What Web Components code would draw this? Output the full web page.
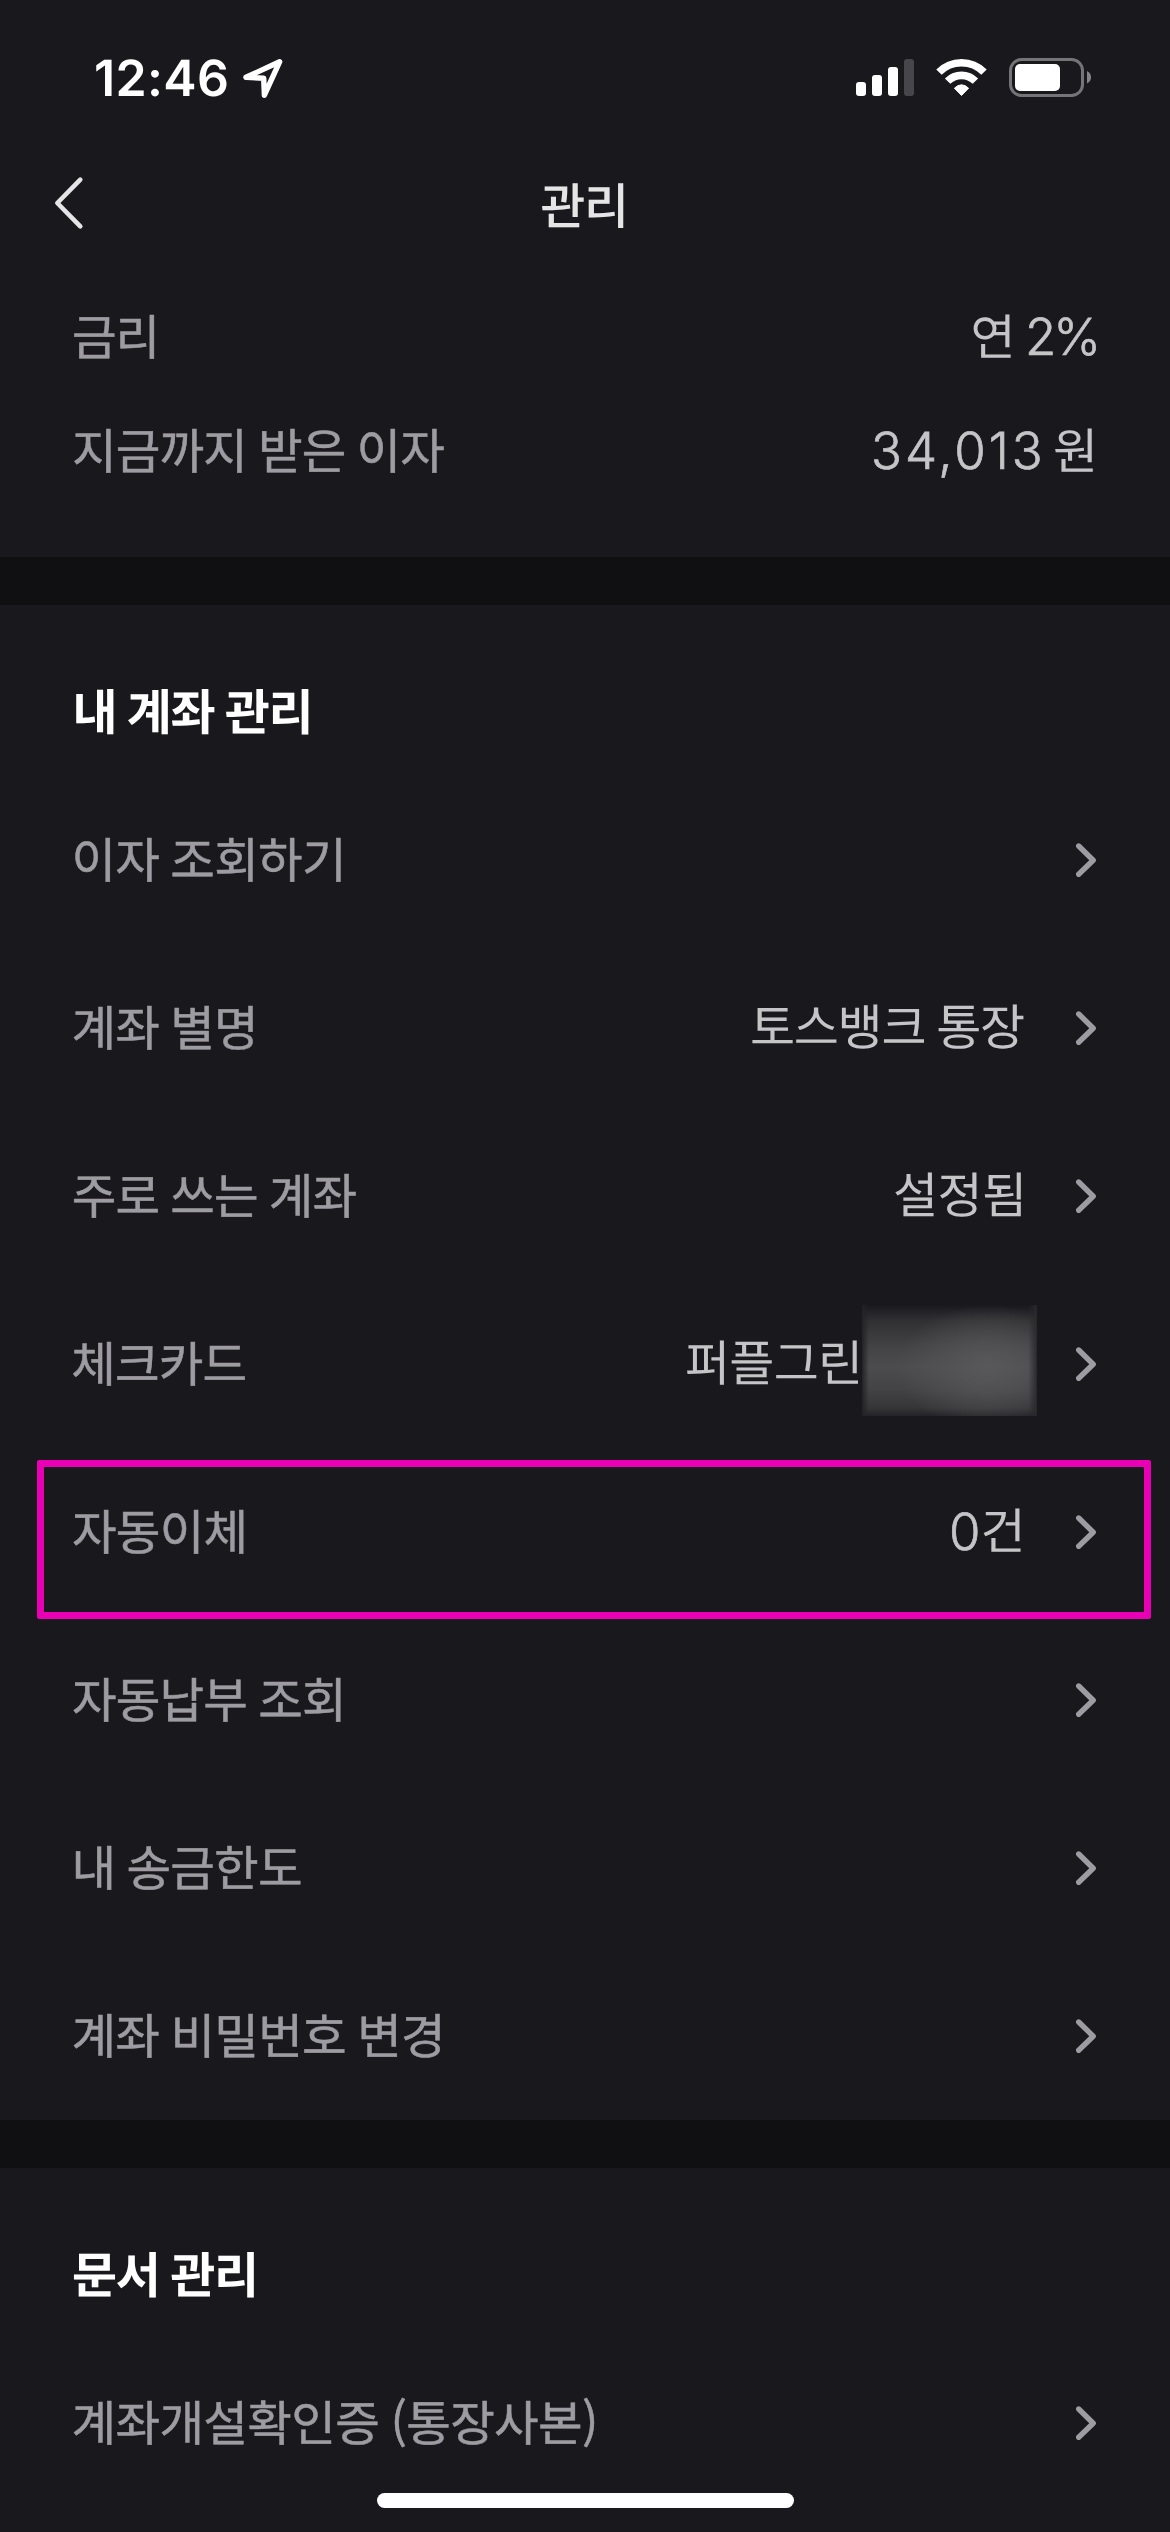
<!DOCTYPE html>
<html lang="ko">
<head>
<meta charset="utf-8">
<title>관리</title>
<style>
html,body{margin:0;padding:0;background:#19181d}
body{width:1170px;height:2532px;overflow:hidden;font-family:"Noto Sans CJK KR",sans-serif}
</style>
</head>
<body>
<account-screen></account-screen>
<script>
const define=(name,html,setup)=>customElements.define(name,class extends HTMLElement{
  connectedCallback(){
    if(this.shadowRoot)return;
    this.attachShadow({mode:'open'}).innerHTML=html;
    if(setup)setup(this);
  }
});

/* A line of text tracked so that its ink is exactly "w" pixels wide. */
const ctx=document.createElement('canvas').getContext('2d');
customElements.define('ink-text',class extends HTMLElement{
  connectedCallback(){
    if(this.shadowRoot)return;
    const a=(n,d)=>this.getAttribute(n)||d;
    const text=a('text',''),size=+a('size',49),weight=a('weight',400);
    const latin=a('face','')==='latin';
    const family=latin?'Inter,"Noto Sans CJK KR",sans-serif':'"Noto Sans CJK KR",sans-serif';
    const w=+a('w',0),dy=+a('dy',0),stroke=+a('stroke',0);
    ctx.font=`${weight} ${size}px ${family}`;
    const m=ctx.measureText(text);
    const left=m.actualBoundingBoxLeft,right=m.width-m.actualBoundingBoxRight;
    this.attachShadow({mode:'open'}).innerHTML=`<style>
      :host{display:block;flex:none;width:${w}px;height:60px;padding-top:${dy}px;box-sizing:border-box}
      span{display:inline-block;vertical-align:top;white-space:pre;margin-left:${left}px;font:${weight} ${size}px/${latin?60:54}px ${family};-webkit-text-stroke:${stroke}px currentColor;text-rendering:geometricPrecision;word-spacing:-1.5px}
    </style><span></span>`;
    const s=this.shadowRoot.querySelector('span');
    s.textContent=text;
    const n=text.length;
    if(n>1){
      const advance=s.getBoundingClientRect().width||m.width;
      s.style.letterSpacing=(w-stroke-(advance+left-right))/(n-1)+'px';
      const wide=s.getBoundingClientRect().width;
      if(wide){
        const ls=parseFloat(s.style.letterSpacing);
        const ink=wide-ls+left-right;
        s.style.letterSpacing=ls+(w-stroke-ink)/(n-1)+'px';
      }
    }
  }
});

define('status-bar',`<style>
:host{display:flex;height:154px;box-sizing:border-box;padding:48px 79px 0 96px;color:#fff}
.sp{flex:1}
svg{flex:none;display:block;margin-top:4px}
</style>
<ink-text text="12:46" face="latin" weight="600" size="50" w="131" dy="1"></ink-text>
<svg style="margin-left:14px" width="46" height="54" viewBox="241 52 46 54"><path d="M279.6 61.8 246 77.3 263.7 78.2 264.4 95.2Z" fill="none" stroke="#fff" stroke-width="5.4" stroke-linejoin="round"/></svg>
<div class="sp"></div>
<svg width="237" height="54" viewBox="854 52 237 54">
<g fill="#fff"><rect x="856" y="82" width="10" height="14" rx="3"/><rect x="872" y="75" width="10" height="21" rx="3"/><rect x="888" y="67" width="10" height="29" rx="3"/><rect x="904" y="59" width="10" height="37" rx="3" fill="#47464b"/></g>
<g fill="none" stroke="#fff"><path stroke-width="7.6" d="M939 72.2A31.5 31.5 0 0 1 984 72.2"/><path stroke-width="7.6" d="M947.6 81.2A19.5 19.5 0 0 1 975.4 81.2"/></g>
<path fill="#fff" stroke="#fff" stroke-width="1" stroke-linejoin="round" d="M954.4 88.2Q961.5 81.4 968.6 88.2L961.5 95.5Z"/>
<rect x="1010.5" y="59.5" width="72" height="36" rx="11" fill="none" stroke="#757477" stroke-width="3"/>
<rect x="1015" y="64" width="45" height="27" rx="5" fill="#fff"/>
<path fill="#858488" d="M1087 71Q1091 73 1091 77.300Q1091 81.500 1087 83.500Z"/>
</svg>`);

define('nav-bar',`<style>
:host{display:flex;align-items:center;height:98px;padding:0 0 4px 52px;color:#e5e5e5}
svg{flex:none;display:block}
ink-text{margin-left:455.300px}
</style>
<svg width="34" height="60" viewBox="52 173 34 60"><path d="M80.300 179.700 57.300 203 80.300 226.400" fill="none" stroke="#e5e5e5" stroke-width="4.600" stroke-linecap="round" stroke-linejoin="round"/></svg>
<ink-text text="관리" weight="500" w="82.700" dy="4"></ink-text>`);

define('info-row',`<style>
:host{display:flex;align-items:center;height:114px;padding:0 0 0 74px;color:#9e9ca3}
.v{flex:1;display:flex;justify-content:flex-end;color:#c5c4c7}
</style><slot name="label"></slot><div class="v"><slot></slot></div>`);

define('menu-row',`<style>
:host{display:flex;align-items:center;height:168px;padding:0 74px 0 0;color:#9e9ca3}
.v{flex:1;display:flex;justify-content:flex-end;align-items:center;color:#c5c4c7}
svg{flex:none;display:block}
</style><slot name="label"></slot><div class="v"><slot></slot></div>
<svg width="20" height="34" viewBox="0 0 20 34"><path d="M2.700 3 17.200 17.200 2.700 31.300" fill="none" stroke="#9e9ca3" stroke-width="5.4" stroke-linecap="round" stroke-linejoin="round"/></svg>`);

define('section-gap',`<style>:host{display:block;height:48px;background:#101012}</style>`);
define('section-title',`<style>:host{display:flex;align-items:center;height:60px;color:#fff}</style><slot></slot>`);

define('masked-text',`<style>
:host{display:block;width:175px;height:111px;overflow:hidden;flex:none}
div{width:100%;height:100%;background:
linear-gradient(90deg,#232327 0,rgba(35,35,39,0) 4%,rgba(35,35,39,0) 95%,#29292c 100%),
radial-gradient(ellipse 90px 62px at 125px 62px,#58585a 0,rgba(88,88,90,0) 100%),
linear-gradient(180deg,#19181d 0,#303033 14%,#434345 38%,#4c4c4e 56%,#434345 76%,#353538 93%,#232327 100%)}
</style><div></div>`);

define('focus-frame',`<style>:host{position:absolute;left:37px;top:1460px;width:1114px;height:159px;box-sizing:border-box;border:7px solid #e900b4;border-radius:2px}</style>`);
define('home-indicator',`<style>:host{position:absolute;left:377px;top:2493px;width:417px;height:15px;border-radius:8px;background:#fff}</style>`);

const rows=[
 ['이자 조회하기',75.4,266],
 ['계좌 별명',73.5,180,'<ink-text text="토스뱅크 통장" w="272" style="margin-right:52px"></ink-text>'],
 ['주로 쓰는 계좌',73.7,283.3,'<ink-text text="설정됨" w="126" style="margin-right:55px"></ink-text>'],
 ['체크카드',73.3,172.7,'<ink-text text="퍼플그린" w="171"></ink-text><masked-text style="margin:0 39px 7px 4px"></masked-text>'],
 ['자동이체',73,171,'<ink-text text="0" face="latin" weight="300" stroke=".7" dy="1" size="51" w="27"></ink-text><ink-text text="건" w="37.500" style="margin:0 55px 0 4.500px"></ink-text>'],
 ['자동납부 조회',73,268.500],
 ['내 송금한도',75.4,226],
 ['계좌 비밀번호 변경',73.5,367]
];
const row=([t,x,w,v=''])=>`<menu-row><ink-text slot="label" text="${t}" size="48.500" stroke=".5" w="${w}" style="margin-left:${x}px"></ink-text>${v}</menu-row>`;

define('account-screen',`<style>
:host{display:flex;flex-direction:column;position:relative;width:1170px;height:2532px;overflow:hidden;background:#19181d}
.info{height:301px;padding-top:24px;box-sizing:border-box}
.info,.sec{display:flex;flex-direction:column}
.sec{padding-top:77px;box-sizing:border-box}
section-title{margin-bottom:34px}
.sec.main{height:1515px}
</style>
<status-bar></status-bar>
<nav-bar></nav-bar>
<div class="info">
<info-row><ink-text slot="label" text="금리" size="48.500" stroke=".5" w="81"></ink-text><ink-text text="연" w="38" dy="1"></ink-text><ink-text text="2%" face="latin" weight="300" stroke=".7" dy="1" size="51" w="68" style="margin:0 73px 0 17.500px"></ink-text></info-row>
<info-row><ink-text slot="label" text="지금까지 받은 이자" size="48.500" stroke=".5" w="370.700"></ink-text><ink-text text="34,013" face="latin" weight="300" stroke=".7" dy="1" size="51" w="166.500"></ink-text><ink-text text="원" w="38.500" dy="1" style="margin:0 76.500px 0 14.500px"></ink-text></info-row>
</div>
<section-gap></section-gap>
<div class="sec main">
<section-title><ink-text text="내 계좌 관리" weight="700" dy="1" w="233" style="margin-left:75.400px"></ink-text></section-title>
${rows.map(row).join('')}
</div>
<section-gap></section-gap>
<div class="sec">
<section-title><ink-text text="문서 관리" weight="700" dy="1" w="181" style="margin-left:73px"></ink-text></section-title>
${row(['계좌개설확인증 (통장사본)',73.500,521])}
</div>
<focus-frame></focus-frame>
<home-indicator></home-indicator>`);
</script>
</body>
</html>
